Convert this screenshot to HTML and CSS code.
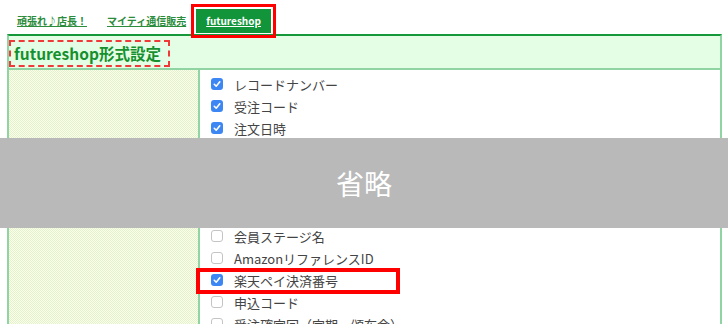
FILE: index.html
```html
<!DOCTYPE html>
<html lang="ja">
<head>
  <meta charset="UTF-8">
  <title>futureshop形式設定</title>
  <link rel="stylesheet" href="styles.css">
</head>
<body>
  <div class="page">
    <nav class="tabs">
      <a class="tab" href="#">頑張れ♪店長！</a>
      <a class="tab" href="#">マイティ通信販売</a>
      <a class="tab active" href="#">futureshop</a>
    </nav>

    <div class="panel">
      <div class="panel-head">
        <h2 class="title">futureshop形式設定</h2>
      </div>
      <div class="panel-body">
        <div class="side"></div>
        <ul class="fields">
          <li class="field"><span class="cb checked"></span>レコードナンバー</li>
          <li class="field"><span class="cb checked"></span>受注コード</li>
          <li class="field"><span class="cb checked"></span>注文日時</li>
          <li class="cut">
            <ul class="fields">
              <li class="field"><span class="cb checked"></span>顧客名</li>
              <li class="field"><span class="cb checked"></span>メールアドレス</li>
              <li class="field"><span class="cb"></span>会員ID</li>
              <li class="field"><span class="cb"></span>会員ランク</li>
            </ul>
          </li>
          <li class="field"><span class="cb"></span>会員ステージ名</li>
          <li class="field"><span class="cb"></span>AmazonリファレンスID</li>
          <li class="field marked"><span class="cb checked"></span>楽天ペイ決済番号<span class="annot"></span></li>
          <li class="field"><span class="cb"></span>申込コード</li>
          <li class="field"><span class="cb"></span>受注確定回（定期・頒布会）</li>
        </ul>
      </div>
    </div>

    <div class="omit">省略</div>
  </div>
</body>
</html>
```

FILE: styles.css
```css
body {
  margin: 0;
  font-family: "Noto Sans CJK JP", "Noto Sans", sans-serif;
  background: #ffffff;
  color: #444;
}

.page {
  padding: 9px 6px 0 7px;
}

.tabs {
  display: flex;
  height: 25px;
}

.tab {
  padding: 0 10px;
  line-height: 24px;
  height: 24px;
  font-size: 10px;
  font-weight: bold;
  color: #2b8c3b;
}

.tab.active {
  background: #12953a;
  color: #ffffff;
  outline: 3px solid #ff0000;
  outline-offset: 2px;
}

.panel {
  border-top: 2px solid #15983a;
  border-left: 2px solid #8fd4a2;
  border-right: 2px solid #8fd4a2;
}

.panel-head {
  background: #e4fee6;
  height: 28px;
  padding-top: 4px;
  border-bottom: 2px solid #8fd4a2;
}

.title {
  display: inline-block;
  margin: 0;
  height: 27px;
  box-sizing: border-box;
  padding: 0 7px 0 3px;
  border: 2px dashed #f03a3a;
  font-size: 15.5px;
  line-height: 22px;
  font-weight: bold;
  color: #16902e;
}

.panel-body {
  display: grid;
  grid-template-columns: 191px 1fr;
}

.side {
  border-right: 2px solid #8fd4a2;
  background: repeating-conic-gradient(#e3f3c6 0 25%, #fbfff2 0 50%) 0 0 / 2px 2px;
}

.fields {
  list-style: none;
  margin: 0;
  padding: 3px 0 0 11px;
}

.cut .fields {
  padding: 0;
}

.cut {
  height: 86px;
  overflow: hidden;
}

.field {
  position: relative;
  display: flex;
  align-items: center;
  gap: 11px;
  height: 22px;
  font-size: 13px;
  color: #444;
}

.cb {
  width: 12px;
  height: 12px;
  box-sizing: border-box;
  border: 1px solid #c4c4c4;
  border-radius: 3px;
  background: #ffffff;
}

.cb.checked {
  border: none;
  background: #3d87f5 url("data:image/svg+xml;utf8,<svg xmlns='http://www.w3.org/2000/svg' width='12' height='12' viewBox='0 0 12 12'><path d='M3.3 6.3 L5.2 8.2 L8.8 3.8' fill='none' stroke='white' stroke-width='1.6' stroke-linecap='round' stroke-linejoin='round'/></svg>") center / 12px 12px no-repeat;
}

.annot {
  position: absolute;
  left: -15px;
  top: -1px;
  width: 204px;
  height: 26px;
  box-sizing: border-box;
  border: 4px solid #ff0000;
}

.omit {
  position: absolute;
  top: 138px;
  left: 0;
  right: 0;
  height: 90px;
  background: #b9b9b9;
  color: #ffffff;
  font-size: 28px;
  display: flex;
  align-items: center;
  justify-content: center;
}
```
